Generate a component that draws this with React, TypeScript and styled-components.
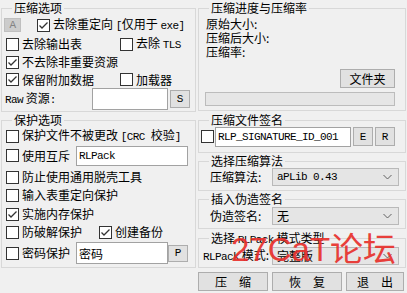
import React from "react";
import styled, { createGlobalStyle } from "styled-components";

const Global = createGlobalStyle`
  html, body { margin: 0; padding: 0; background: #f0f0f0; }
  body {
    font-family: "Noto Sans CJK SC", "Liberation Sans", sans-serif;
    font-size: 12px;
    color: #000;
  }
  * { box-sizing: border-box; }
`;

const Window = styled.div`
  position: relative;
  width: 407px;
  height: 293px;
  overflow: hidden;
  background: #f0f0f0;
  display: flex;
  padding-left: 1px;
  gap: 2px;
`;

const Column = styled.div<{ $w: number }>`
  width: ${(p) => p.$w}px;
  flex: none;
  display: flex;
  flex-direction: column;
  padding-top: 8px;
`;

const Group = styled.div<{ $h: number; $mt?: number; $pt?: number; $pl?: number }>`
  position: relative;
  height: ${(p) => p.$h}px;
  margin-top: ${(p) => p.$mt ?? 0}px;
  padding-top: ${(p) => p.$pt ?? 0}px;
  padding-left: ${(p) => p.$pl ?? 0}px;
  border: 1px solid #d8d8d8;
  display: flex;
  flex-direction: column;
  flex: none;
`;

const Legend = styled.span`
  position: absolute;
  top: -8px;
  left: 10px;
  padding: 0 2px;
  background: #f0f0f0;
  line-height: 14px;
  white-space: nowrap;
`;

const Row = styled.div<{ $h: number; $mt?: number; $pl?: number }>`
  display: flex;
  align-items: center;
  height: ${(p) => p.$h}px;
  margin-top: ${(p) => p.$mt ?? 0}px;
  padding-left: ${(p) => p.$pl ?? 0}px;
  white-space: nowrap;
  flex: none;
`;

const Lat = styled.span`
  font-family: "Liberation Mono", monospace;
  font-size: 11px;
  letter-spacing: -0.6px;
`;

const CheckLabel = styled.label<{ $w?: number; $ml?: number }>`
  display: flex;
  align-items: center;
  gap: 3px;
  line-height: 14px;
  margin-left: ${(p) => p.$ml ?? 0}px;
  ${(p) => (p.$w ? `width: ${p.$w}px; flex: none;` : "")}
`;

const Box = styled.span`
  width: 13px;
  height: 13px;
  flex: none;
  border: 1px solid #333;
  background: #fff;
  display: inline-flex;
  align-items: center;
  justify-content: center;
`;

const Text = styled.span<{ $w?: number }>`
  line-height: 14px;
  ${(p) => (p.$w ? `width: ${p.$w}px; flex: none;` : "")}
`;

const Input = styled.input<{ $w: number; $h: number; $ml?: number }>`
  width: ${(p) => p.$w}px;
  height: ${(p) => p.$h}px;
  margin: 0 0 0 ${(p) => p.$ml ?? 0}px;
  flex: none;
  border: 1px solid #a2a2a2;
  background: #fff;
  padding: 0 0 0 2px;
  font-family: "Liberation Mono", "Noto Sans CJK SC", monospace;
  font-size: 11px;
  letter-spacing: -0.6px;
  color: #000;
  outline: none;
`;

const CnInput = styled(Input)`
  font-family: "Noto Sans CJK SC", sans-serif;
  font-size: 12px;
  letter-spacing: 0;
`;

const Button = styled.button<{ $w: number; $h: number; $ml?: number; $mt?: number; $disabled?: boolean }>`
  width: ${(p) => p.$w}px;
  height: ${(p) => p.$h}px;
  margin: ${(p) => p.$mt ?? 0}px 0 0 ${(p) => p.$ml ?? 0}px;
  flex: none;
  padding: 0;
  border: 1px solid ${(p) => (p.$disabled ? "#bfbfbf" : "#adadad")};
  background: ${(p) => (p.$disabled ? "#cccccc" : "#e1e1e1")};
  color: ${(p) => (p.$disabled ? "#838383" : "#000")};
  font-family: "Noto Sans CJK SC", sans-serif;
  font-size: 12px;
  line-height: 14px;
  display: flex;
  align-items: center;
  justify-content: center;
`;

const MonoButton = styled(Button)`
  font-family: "Liberation Mono", monospace;
  font-size: 11px;
`;

const InfoLine = styled.div`
  line-height: 14px;
  height: 14px;
`;

const FolderButton = styled(Button)`
  align-self: flex-end;
  margin-right: 10px;
`;

const Progress = styled.div`
  margin-top: 4px;
  margin-left: -1px;
  width: 190px;
  height: 14px;
  border: 1px solid #bcbcbc;
  background: #e6e6e6;
  flex: none;
`;

const Combo = styled.div<{ $w: number }>`
  width: ${(p) => p.$w}px;
  height: 18px;
  flex: none;
  border: 1px solid #b9b9b9;
  background: #e5e5e5;
  display: flex;
  align-items: center;
  justify-content: space-between;
  padding: 0 6px 0 4px;
  line-height: 14px;
`;

const ButtonBar = styled.div`
  display: flex;
  gap: 4px;
  margin-top: 4px;
`;

const Watermark = styled.div`
  position: absolute;
  left: 231px;
  top: 231px;
  font-family: "Liberation Sans", "Noto Sans CJK SC", sans-serif;
  font-size: 33px;
  line-height: 38px;
  color: #e8302c;
  white-space: nowrap;
  pointer-events: none;
  opacity: 0.92;
`;

const Chevron = () => (
  <svg width="9" height="6" viewBox="0 0 9 6">
    <polyline points="0.5,1 4.5,5 8.5,1" fill="none" stroke="#606060" strokeWidth="1" />
  </svg>
);

const Check = ({ checked, children, w, ml }: { checked?: boolean; children?: React.ReactNode; w?: number; ml?: number }) => (
  <CheckLabel $w={w} $ml={ml}>
    <Box>
      {checked && (
        <svg width="11" height="11" viewBox="0 0 11 11">
          <polyline points="1.5,5.5 4,8 9.5,2.5" fill="none" stroke="#333" strokeWidth="1.3" />
        </svg>
      )}
    </Box>
    {children && <Text>{children}</Text>}
  </CheckLabel>
);

export default function App() {
  return (
    <>
      <Global />
      <Window>
        <Column $w={195}>
          <Group $h={104}>
            <Legend>压缩选项</Legend>
            <Row $h={18} $mt={7} $pl={2}>
              <Button $w={17} $h={14} $disabled>
                <Lat>A</Lat>
              </Button>
              <Check checked ml={16}>
                去除重定向 <Lat>[</Lat>仅用于 <Lat>exe]</Lat>
              </Check>
            </Row>
            <Row $h={18} $mt={1} $pl={4}>
              <Check w={114}>去除输出表</Check>
              <Check>
                去除 <Lat>TLS</Lat>
              </Check>
            </Row>
            <Row $h={18} $pl={4}>
              <Check checked>不去除非重要资源</Check>
            </Row>
            <Row $h={17} $pl={4}>
              <Check checked w={114}>
                保留附加数据
              </Check>
              <Check>加载器</Check>
            </Row>
            <Row $h={22} $pl={3}>
              <Text $w={87}>
                <Lat>Raw</Lat> 资源<Lat>:</Lat>
              </Text>
              <Input $w={76} $h={22} readOnly defaultValue="" />
              <MonoButton $w={20} $h={18} $ml={2}>
                S
              </MonoButton>
            </Row>
          </Group>

          <Group $h={148} $mt={8}>
            <Legend>保护选项</Legend>
            <Row $h={18} $mt={6} $pl={4}>
              <Check>
                保护文件不被更改 <Lat>[CRC </Lat>校验<Lat>]</Lat>
              </Check>
            </Row>
            <Row $h={21} $pl={4}>
              <Check w={70}>使用互斥</Check>
              <Input $w={112} $h={20} readOnly defaultValue="RLPack" />
            </Row>
            <Row $h={18} $mt={2} $pl={4}>
              <Check>防止使用通用脱壳工具</Check>
            </Row>
            <Row $h={18} $pl={4}>
              <Check>输入表重定向保护</Check>
            </Row>
            <Row $h={18} $mt={1} $pl={4}>
              <Check checked>实施内存保护</Check>
            </Row>
            <Row $h={18} $pl={4}>
              <Check w={93}>防破解保护</Check>
              <Check checked>创建备份</Check>
            </Row>
            <Row $h={22} $mt={1} $pl={4}>
              <Check w={70}>密码保护</Check>
              <CnInput $w={92} $h={22} readOnly defaultValue="密码" />
              <MonoButton $w={20} $h={17}>
                P
              </MonoButton>
            </Row>
          </Group>
        </Column>

        <Column $w={208}>
          <Group $h={103} $pt={8} $pl={7}>
            <Legend>压缩进度与压缩率</Legend>
            <InfoLine>原始大小:</InfoLine>
            <InfoLine>压缩后大小:</InfoLine>
            <InfoLine>压缩率:</InfoLine>
            <FolderButton $w={55} $h={19} $mt={10}>
              文件夹
            </FolderButton>
            <Progress />
          </Group>

          <Group $h={33} $mt={9} $pt={5}>
            <Legend>压缩文件签名</Legend>
            <Row $h={21} $pl={2}>
              <Check />
              <Input $w={136} $h={20} $ml={1} readOnly defaultValue="RLP_SIGNATURE_ID_001" />
              <MonoButton $w={20} $h={19} $ml={2}>
                E
              </MonoButton>
              <MonoButton $w={20} $h={19} $ml={2}>
                R
              </MonoButton>
            </Row>
          </Group>

          <Group $h={30} $mt={8} $pt={5}>
            <Legend>选择压缩算法</Legend>
            <Row $h={20} $pl={11}>
              <Text $w={62}>压缩算法:</Text>
              <Combo $w={127}>
                <Lat>aPLib 0.43</Lat>
                <Chevron />
              </Combo>
            </Row>
          </Group>

          <Group $h={30} $mt={8} $pt={6}>
            <Legend>插入伪造签名</Legend>
            <Row $h={20} $pl={11}>
              <Text $w={62}>伪造签名:</Text>
              <Combo $w={127}>
                <span>无</span>
                <Chevron />
              </Combo>
            </Row>
          </Group>

          <Group $h={30} $mt={9} $pt={7}>
            <Legend>
              选择 <Lat>RLPack</Lat> 模式类型
            </Legend>
            <Row $h={20} $pl={4}>
              <Text $w={69}>
                <Lat>RLPack</Lat> 模式:
              </Text>
              <Combo $w={127}>
                <span>完整版</span>
                <Chevron />
              </Combo>
            </Row>
          </Group>

          <ButtonBar>
            <Button $w={70} $h={19}>压　缩</Button>
            <Button $w={70} $h={19}>恢　复</Button>
            <Button $w={58} $h={19}>退　出</Button>
          </ButtonBar>
        </Column>

        <Watermark>27CaT论坛</Watermark>
      </Window>
    </>
  );
}
